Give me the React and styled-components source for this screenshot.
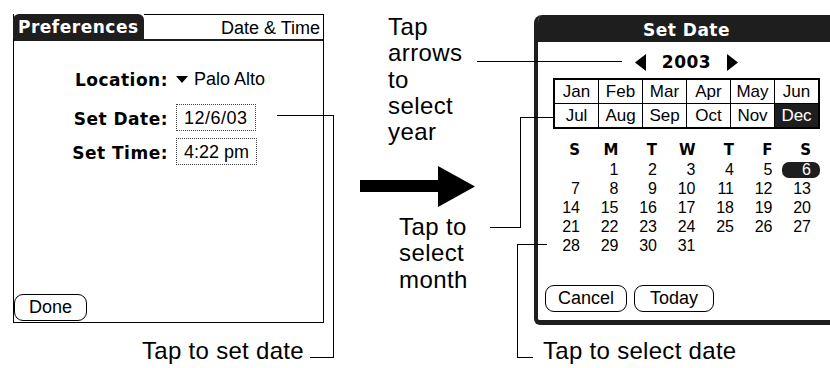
import React from 'react';
import styled, { createGlobalStyle } from 'styled-components';

const INK = '#1e1e1e';
const palmBold = `"DejaVu Sans", "Liberation Sans", sans-serif`;
const palmText = `"Liberation Sans", Arial, sans-serif`;

const GlobalStyle = createGlobalStyle`
  html, body {
    margin: 0;
    padding: 0;
    background: #fff;
  }
  body {
    font-family: "Liberation Sans", Arial, sans-serif;
    color: #000;
  }
`;

const MONTHS = ['Jan', 'Feb', 'Mar', 'Apr', 'May', 'Jun', 'Jul', 'Aug', 'Sep', 'Oct', 'Nov', 'Dec'];
const WEEKDAYS = ['S', 'M', 'T', 'W', 'T', 'F', 'S'];
// december 2003 starts on a monday
const DAYS = [null, ...Array.from({ length: 31 }, (_, i) => i + 1)];

export default function App() {
  return (
    <>
      <GlobalStyle />
      <Page>
        <Column $w={311}>
          <PrefScreen>
            <TitleBar>
              <TitleTab>Preferences</TitleTab>
              <TitleRest>Date &amp; Time</TitleRest>
            </TitleBar>
            <Form>
              <FormRow $mb={12}>
                <Label>Location:</Label>
                <Picker>
                  <svg width="12" height="7" viewBox="0 0 12 7">
                    <polygon points="0,0 12,0 6,7" fill="#000" />
                  </svg>
                  Palo Alto
                </Picker>
              </FormRow>
              <FormRow $mb={7}>
                <Label>Set Date:</Label>
                <ValueBox $spacing={0.5}>12/6/03</ValueBox>
              </FormRow>
              <FormRow>
                <Label>Set Time:</Label>
                <ValueBox>4:22 pm</ValueBox>
              </FormRow>
            </Form>
            <Footer>
              <PalmButton $w={73}>Done</PalmButton>
            </Footer>
          </PrefScreen>
          <Caption $left={129} $top={16}>Tap to set date</Caption>
        </Column>

        <Column $w={210}>
          <Note $left={64}>
            Tap<br />arrows<br />to<br />select<br />year
          </Note>
          <BigArrow width="116" height="41" viewBox="0 0 116 41">
            <rect x="0" y="14" width="80" height="12" fill="#000" />
            <polygon points="78,0 115,20.5 78,41" fill="#000" />
          </BigArrow>
          <Note $left={75} $top={7}>
            Tap to<br />select<br />month
          </Note>
        </Column>

        <Column $w={305} $top={1}>
          <DateScreen>
            <DialogTitle>Set Date</DialogTitle>
            <YearRow>
              <svg width="11" height="17" viewBox="0 0 11 17">
                <polygon points="11,0 0,8.5 11,17" fill="#000" />
              </svg>
              <Year>2003</Year>
              <svg width="11" height="17" viewBox="0 0 11 17">
                <polygon points="0,0 11,8.5 0,17" fill="#000" />
              </svg>
            </YearRow>
            <MonthGrid>
              {MONTHS.map((m) => (
                <MonthCell key={m} $active={m === 'Dec'}>{m}</MonthCell>
              ))}
            </MonthGrid>
            <DayGrid>
              {WEEKDAYS.map((d, i) => (
                <DayHead key={i}>{d}</DayHead>
              ))}
              {DAYS.map((d, i) => (
                <DayNum key={i}>
                  {d === 6 ? <Selected>6</Selected> : d}
                </DayNum>
              ))}
            </DayGrid>
            <ButtonRow>
              <PalmButton $w={82}>Cancel</PalmButton>
              <PalmButton $w={80}>Today</PalmButton>
            </ButtonRow>
          </DateScreen>
          <Caption $left={9} $top={14}>Tap to select date</Caption>
        </Column>

        <Leaders width="830" height="368" viewBox="0 0 830 368">
          <path d="M277 115.5 H333.5 V357.5 H310" />
          <path d="M477 61.5 H622" />
          <path d="M490 227.5 H520.5 V117.5 H553" />
          <path d="M547 244.5 H517.5 V357.5 H533" />
        </Leaders>
      </Page>
    </>
  );
}

const Page = styled.div`
  position: relative;
  width: 830px;
  height: 368px;
  overflow: hidden;
  display: flex;
  box-sizing: border-box;
  padding: 14px 0 0 13px;
`;

const Column = styled.div`
  flex: none;
  width: ${(p) => p.$w}px;
  margin-top: ${(p) => p.$top || 0}px;
  display: flex;
  flex-direction: column;
`;

const PrefScreen = styled.div`
  box-sizing: border-box;
  width: 311px;
  height: 309px;
  border: 1px solid #000;
  border-top: none;
  display: flex;
  flex-direction: column;
`;

const TitleBar = styled.div`
  display: flex;
  height: 27px;
  box-sizing: border-box;
  border-bottom: 2px solid ${INK};
`;

const TitleTab = styled.div`
  margin-left: -1px;
  padding: 1px 5px 0;
  display: flex;
  align-items: center;
  background: ${INK};
  color: #fff;
  border-radius: 6px 6px 0 0;
  font: bold 17px ${palmBold};
  letter-spacing: 0.5px;
`;

const TitleRest = styled.div`
  flex: 1;
  border-top: 1px solid #000;
  display: flex;
  align-items: center;
  justify-content: flex-end;
  padding: 3px 3px 0 0;
  font: 18px ${palmText};
`;

const Form = styled.div`
  margin-top: 24px;
  display: flex;
  flex-direction: column;
`;

const FormRow = styled.div`
  display: grid;
  grid-template-columns: 154px auto;
  column-gap: 8px;
  align-items: center;
  justify-items: start;
  height: 27px;
  margin-bottom: ${(p) => p.$mb || 0}px;
`;

const Label = styled.div`
  justify-self: end;
  padding-top: 2px;
  font: bold 17px ${palmBold};
  letter-spacing: 0.5px;
`;

const Picker = styled.div`
  display: flex;
  align-items: center;
  gap: 6px;
  padding-top: 2px;
  font: 18px ${palmText};
`;

const ValueBox = styled.div`
  box-sizing: border-box;
  height: 27px;
  padding: 1px 7px 0;
  display: flex;
  align-items: center;
  border: 1px dotted #444;
  font: 18px ${palmText};
  letter-spacing: ${(p) => p.$spacing || 0}px;
`;

const Footer = styled.div`
  margin-top: auto;
  display: flex;
  padding-bottom: 1px;
`;

const PalmButton = styled.div`
  box-sizing: border-box;
  width: ${(p) => p.$w}px;
  height: 27px;
  display: flex;
  align-items: center;
  justify-content: center;
  border: 1px solid #000;
  border-radius: 9px;
  background: #fff;
  font: 18px ${palmText};
`;

const Caption = styled.div`
  margin-top: ${(p) => p.$top}px;
  padding-left: ${(p) => p.$left}px;
  font: 24px ${palmText};
  letter-spacing: 0.3px;
  line-height: 24px;
  white-space: nowrap;
`;

const Note = styled.div`
  margin-top: ${(p) => p.$top || 0}px;
  padding-left: ${(p) => p.$left}px;
  font: 24px ${palmText};
  letter-spacing: 0.4px;
  line-height: 26.3px;
`;

const BigArrow = styled.svg`
  display: block;
  margin: 20.5px 0 0 36px;
`;

const DateScreen = styled.div`
  box-sizing: border-box;
  width: 305px;
  height: 310px;
  border: 4px solid ${INK};
  border-top: none;
  border-bottom-width: 5px;
  border-radius: 8px 8px 6px 6px;
  background: #fff;
  overflow: hidden;
  display: flex;
  flex-direction: column;
`;

const DialogTitle = styled.div`
  height: 27px;
  flex: none;
  display: flex;
  align-items: center;
  justify-content: center;
  padding-top: 2px;
  box-sizing: border-box;
  background: ${INK};
  color: #fff;
  font: bold 17px ${palmBold};
  letter-spacing: 0.5px;
`;

const YearRow = styled.div`
  margin-top: 6px;
  height: 28px;
  display: flex;
  align-items: center;
  justify-content: center;
  gap: 16px;
`;

const Year = styled.span`
  font: bold 17px ${palmBold};
  letter-spacing: 0.5px;
`;

const MonthGrid = styled.div`
  margin: 2px 15px 0;
  display: grid;
  grid-template-columns: repeat(6, 1fr);
  grid-auto-rows: 23px;
  gap: 1px;
  background: #000;
  border: 2px solid #000;
`;

const MonthCell = styled.div`
  display: flex;
  align-items: center;
  justify-content: center;
  padding-top: 1px;
  background: ${(p) => (p.$active ? INK : '#fff')};
  color: ${(p) => (p.$active ? '#fff' : '#000')};
  font: 17px ${palmText};
`;

const DayGrid = styled.div`
  margin-top: 12px;
  padding-left: 3.5px;
  display: grid;
  grid-template-columns: repeat(7, 38.5px);
  grid-auto-rows: 19px;
  line-height: 19px;
`;

const DayHead = styled.div`
  text-align: right;
  font: bold 15px ${palmBold};
`;

const DayNum = styled.div`
  text-align: right;
  font: 16px ${palmText};
  line-height: 19px;
`;

const Selected = styled.span`
  display: inline-block;
  margin-right: -9px;
  padding: 0 9px 0 20px;
  line-height: 16px;
  border-radius: 7px;
  background: ${INK};
  color: #fff;
`;

const ButtonRow = styled.div`
  margin-top: auto;
  padding: 0 0 8px 7px;
  display: flex;
  gap: 7px;
`;

const Leaders = styled.svg`
  position: absolute;
  left: 0;
  top: 0;
  pointer-events: none;
  fill: none;
  stroke: #000;
  stroke-width: 1;
  shape-rendering: crispEdges;
`;
